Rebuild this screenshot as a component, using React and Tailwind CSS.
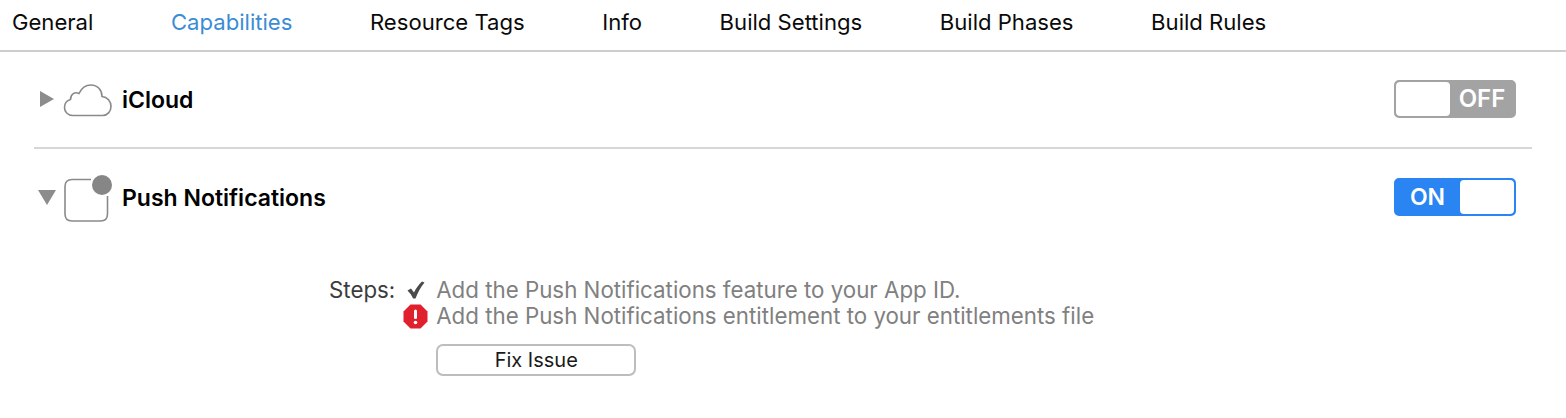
const tabs = ['General', 'Capabilities', 'Resource Tags', 'Info', 'Build Settings', 'Build Phases', 'Build Rules'];

function CloudIcon() {
  return (
    <svg width="50" height="34" viewBox="0 0 50 34" fill="none" className="mt-[4px] ml-[9px] shrink-0">
      <path
        d="M10 31.5 C4.5 31.5 1.5 27.5 1.5 23.5 C1.5 19.5 4 16.5 7.5 15.5 C7.5 10 12 7.5 16 9.5 C18.5 4 23 1 28 1 C34.5 1 39 6 39 12.5 C44.5 13 48 17.5 48 22.5 C48 27.5 44.5 31.5 39.5 31.5 Z"
        stroke="#8a8a8a"
        strokeWidth="1.6"
      />
    </svg>
  );
}

function PushIcon() {
  return (
    <svg width="49" height="48" viewBox="0 0 49 48" fill="none" className="mt-[3px] ml-[7px] mr-[-3px] shrink-0">
      <path
        d="M28 4.5 H9 C4.5 4.5 2 7 2 11.5 V39 C2 43.5 4.5 46 9 46 H37.5 C42 46 44.5 43.5 44.5 39 V21"
        stroke="#8a8a8a"
        strokeWidth="1.6"
      />
      <circle cx="39" cy="10" r="10" fill="#868686" />
    </svg>
  );
}

function CheckIcon() {
  return (
    <svg width="18" height="18" viewBox="0 0 18 18" className="shrink-0">
      <path d="M0.5 9.5 L4 7.5 L7 11.5 C9 7 12 3.5 15 0.5 L17.5 1.5 C13.5 6.5 10.5 12 8.5 17.5 L6 17.5 C4.8 14.5 3 12 0.5 9.5 Z" fill="#4a4a4a" />
    </svg>
  );
}

function StopIcon() {
  return (
    <svg width="25" height="25" viewBox="0 0 25 25" className="shrink-0">
      <polygon points="7.5,0.5 17.5,0.5 24.5,7.5 24.5,17.5 17.5,24.5 7.5,24.5 0.5,17.5 0.5,7.5" fill="#e0202c" />
      <rect x="11" y="5.5" width="3" height="9.5" rx="1.5" fill="#fff" />
      <circle cx="12.5" cy="18.5" r="1.8" fill="#fff" />
    </svg>
  );
}

function Toggle({ on }) {
  if (on) {
    return (
      <div className="flex h-[38px] w-[122px] overflow-hidden rounded-[5px] border-2 border-[#2a84f1] bg-[#2a84f1]">
        <div className="flex w-[64px] items-center justify-center pr-[1px] text-[23px] font-semibold text-white">ON</div>
        <div className="flex-1 rounded-[4px] bg-white" />
      </div>
    );
  }
  return (
    <div className="flex h-[38px] w-[122px] overflow-hidden rounded-[5px] border-2 border-[#a3a3a3] bg-[#a3a3a3]">
      <div className="w-[54px] rounded-[4px] bg-white" />
      <div className="flex flex-1 items-center justify-center text-[24px] font-semibold text-white">OFF</div>
    </div>
  );
}

export default function App() {
  return (
    <div className="h-[418px] w-[1566px] overflow-hidden bg-white font-['Inter',sans-serif] antialiased">
      <div className="flex h-[52px] items-center gap-[77.6px] border-b-2 border-[#cdcdcd] pb-[5px] pl-[12px] text-[22.1px] text-[#0a0a0a]">
        {tabs.map((tab) => (
          <span key={tab} className={tab === 'Capabilities' ? 'text-[#3a8cd6]' : ''}>
            {tab}
          </span>
        ))}
      </div>

      <div className="mx-[34px]">
        <div className="flex h-[97px] items-center border-b-2 border-[#d6d6d6] pr-[16px] pb-[2px]">
          <div className="ml-[6px] h-0 w-0 border-y-[8px] border-l-[14px] border-y-transparent border-l-[#8c8c8c]" />
          <CloudIcon />
          <span className="ml-[9px] flex-1 pt-[3px] text-[23px] font-semibold text-black">iCloud</span>
          <Toggle />
        </div>

        <div className="flex h-[96px] items-center pr-[16px]">
          <div className="ml-[4px] h-0 w-0 border-x-[9px] border-t-[15px] border-x-transparent border-t-[#8c8c8c]" />
          <PushIcon />
          <span className="ml-[13px] flex-1 pt-[2px] text-[23px] font-semibold text-black">Push Notifications</span>
          <Toggle on />
        </div>
      </div>

      <div className="mt-[32px] flex pl-[329px] text-[22.3px] leading-[26px]">
        <span className="text-[#3c3c3c]">Steps:</span>
        <div className="ml-[7px] flex flex-col">
          <div className="flex h-[26px] items-center text-[#808080]">
            <span className="flex w-[34px] justify-start pl-[5px]">
              <CheckIcon />
            </span>
            <span>Add the Push Notifications feature to your App ID.</span>
          </div>
          <div className="flex h-[26px] items-center text-[#808080]">
            <span className="flex w-[34px] justify-start pl-[1px]">
              <StopIcon />
            </span>
            <span>Add the Push Notifications entitlement to your entitlements file</span>
          </div>
          <button
            type="button"
            className="mt-[15px] ml-[34px] h-[32px] w-[200px] rounded-[7px] border-2 border-[#bdbdbd] bg-white text-[20px] leading-none text-[#1a1a1a]"
          >
            Fix Issue
          </button>
        </div>
      </div>
    </div>
  );
}
